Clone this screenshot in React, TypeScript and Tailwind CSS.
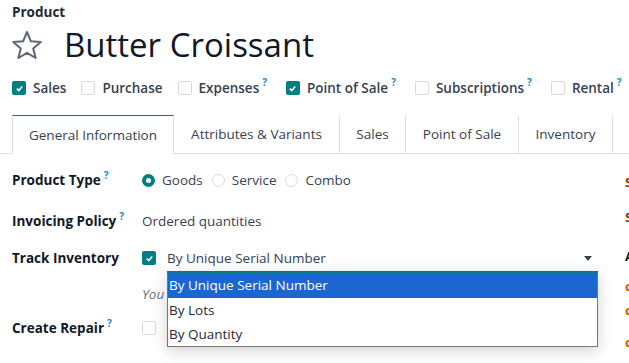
import React from "react";

const font = { fontFamily: '"Open Sans", "Noto Sans", sans-serif' };

function Check({ on }: { on?: boolean }) {
  return on ? (
    <span className="inline-flex h-[14px] w-[14px] shrink-0 items-center justify-center rounded-[2px] bg-[#017e84]">
      <svg width="9" height="9" viewBox="0 0 10 10">
        <path d="M2 5.2 L4.2 7.3 L8 2.8" fill="none" stroke="white" strokeWidth="1.8" />
      </svg>
    </span>
  ) : (
    <span className="inline-block h-[14px] w-[14px] shrink-0 rounded-[2px] border border-[#d8dadd] bg-white" />
  );
}

function Q() {
  return (
    <span className="relative top-[-6px] ml-[3px] text-[10px] font-bold leading-none text-[#0f8fc7]">?</span>
  );
}

function App() {
  const apps: [string, boolean, boolean][] = [
    ["Sales", true, false],
    ["Purchase", false, false],
    ["Expenses", false, true],
    ["Point of Sale", true, true],
    ["Subscriptions", false, true],
    ["Rental", false, true],
  ];
  const tabs = ["Attributes & Variants", "Sales", "Point of Sale", "Inventory"];
  return (
    <div style={font} className="relative h-[363px] w-[629px] overflow-hidden bg-white text-[#374151]">
      <div className="px-3 pt-[3px]">
        <div className="text-[13.5px] font-bold leading-[18px] text-[#1f2937]">Product</div>
        <div className="mt-[6px] flex items-center">
          <svg width="32" height="30" viewBox="0 0 32 30" className="ml-[-1px] shrink-0">
            <path
              d="M16 2 L19.9 11.3 L29.8 12 L22.2 18.4 L24.6 28 L16 22.8 L7.4 28 L9.8 18.4 L2.2 12 L12.1 11.3 Z"
              fill="none"
              stroke="#5f6673"
              strokeWidth="2"
              strokeLinejoin="round"
            />
          </svg>
          <span className="ml-[21px] whitespace-nowrap text-[33px] leading-[36px] text-[#111827]">
            Butter Croissant
          </span>
        </div>
        <div className="mt-[15px] flex h-[20px] items-center whitespace-nowrap text-[13.5px] font-semibold text-[#374151]">
          {apps.map(([name, on, q]) => (
            <div key={name} className={"flex shrink-0 items-center " + (q ? "mr-[19px]" : "mr-[15px]")}>
              <Check on={on} />
              <span className="ml-[7px]">{name}</span>
              {q && <Q />}
            </div>
          ))}
        </div>
      </div>
      <div className="mt-[17px] flex h-[39px] whitespace-nowrap border-b border-[#dee2e6] text-[13.5px] text-[#374151]">
        <div className="w-3 shrink-0" />
        <div className="mb-[-1px] flex w-[162px] shrink-0 items-center justify-center border-x border-t border-[#dee2e6] border-t-[#714b67] bg-white">
          General Information
        </div>
        {tabs.map((t, i) => (
          <div
            key={t}
            className={
              "flex shrink-0 items-center justify-center border-r border-[#dee2e6] " +
              (i === 0 ? "w-[166px]" : i === 1 ? "w-[66px]" : i === 2 ? "w-[113px]" : "w-[94px]")
            }
          >
            {t}
          </div>
        ))}
      </div>
      <div className="relative whitespace-nowrap px-3 pt-[14px] text-[13.5px]">
        <div className="flex h-[24px] items-center">
          <div className="w-[130px] shrink-0 font-bold text-[#111827]">
            Product Type
            <Q />
          </div>
          <div className="flex items-center text-[#374151]">
            <span className="inline-block h-[13px] w-[13px] rounded-full border-[4px] border-[#017e84]" />
            <span className="ml-[7px]">Goods</span>
            <span className="ml-[9px] inline-block h-[13px] w-[13px] rounded-full border border-[#d8dadd]" />
            <span className="ml-[7px]">Service</span>
            <span className="ml-[9px] inline-block h-[13px] w-[13px] rounded-full border border-[#d8dadd]" />
            <span className="ml-[7px]">Combo</span>
          </div>
        </div>
        <div className="mt-[17px] flex h-[24px] items-center">
          <div className="w-[130px] shrink-0 font-bold text-[#111827]">
            Invoicing Policy
            <Q />
          </div>
          <div className="text-[#374151]">Ordered quantities</div>
        </div>
        <div className="mt-[13px] flex h-[24px] items-center">
          <div className="w-[130px] shrink-0 font-bold text-[#111827]">Track Inventory</div>
          <Check on />
          <div className="ml-[11px] flex w-[430px] shrink-0 items-center justify-between text-[#374151]">
            <span>By Unique Serial Number</span>
            <svg width="8" height="5" viewBox="0 0 8 5" className="mr-[5px]">
              <path d="M0 0 L8 0 L4 5 Z" fill="#374151" />
            </svg>
          </div>
        </div>
        <div className="mt-[13px] flex h-[22px] items-center pl-[130px] italic text-[#6b7280]">You</div>
        <div className="mt-[11px] flex h-[24px] items-center">
          <div className="w-[130px] shrink-0 font-bold text-[#111827]">
            Create Repair
            <Q />
          </div>
          <Check />
        </div>
        <div className="absolute left-[167px] top-[117px] w-[431px] border-t-2 border-[#017e84] shadow-[0_4px_14px_rgba(0,0,0,0.18)]">
          <div className="border-x border-b border-[#767676] bg-white text-[13.5px] text-[#1f2937]">
            <div className="flex h-[25px] items-center bg-[#1a67d2] pl-[1px] text-white">By Unique Serial Number</div>
            <div className="flex h-[24px] items-center pl-[1px]">By Lots</div>
            <div className="flex h-[24px] items-center pl-[1px]">By Quantity</div>
          </div>
        </div>
      </div>
      <div className="absolute left-[625px] top-[172px] flex flex-col text-[13px] font-bold leading-[20px]">
        <span className="text-[#8a3c00]">S</span>
        <span className="mt-[15px] text-[#8a3c00]">S</span>
        <span className="mt-[19px] text-[#111827]">A</span>
        <span className="mt-[10px] text-[#c05a00]">c</span>
        <span className="mt-[4px] text-[#c05a00]">c</span>
        <span className="mt-[12px] text-[#c05a00]">c</span>
      </div>
    </div>
  );
}

export default App;
